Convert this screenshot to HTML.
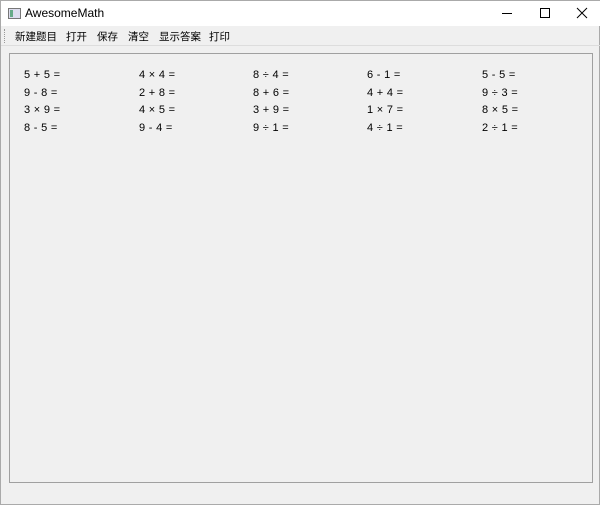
<!DOCTYPE html>
<html><head><meta charset="utf-8"><style>
body{margin:0;width:600px;height:505px;background:#f0f0f0;font-family:"Liberation Sans","Noto Sans CJK SC",sans-serif;position:relative;overflow:hidden;border:1px solid #aaa;box-sizing:border-box}
.title{position:absolute;left:0;top:0;width:600px;height:25px;background:#fff}
.title span{position:absolute;left:24px;top:5px;font-size:12px;color:#000}
.icon{position:absolute;left:7px;top:7px;width:11px;height:9px;border:1px solid #777;background:#dde}
.icon:before{content:"";position:absolute;left:1px;top:1px;width:3px;height:7px;background:#6a8}
.menu{position:absolute;top:25px;left:0;width:600px;height:19px;border-bottom:1px solid #ddd}
.menu span{position:absolute;top:3px;font-size:10.5px;color:#000}
.grip{position:absolute;left:3px;top:28px;width:1px;height:14px;border-left:1px dotted #999}
.panel{position:absolute;left:8px;top:52px;width:582px;height:428px;border:1px solid #a0a0a0}
.q{position:absolute;font-size:11px;color:#000;white-space:pre;letter-spacing:0.3px}
</style></head><body>
<div class="title"><div class="icon"></div><span>AwesomeMath</span>
<svg style="position:absolute;left:500px;top:6px" width="90" height="14">
<line x1="1" y1="6.5" x2="11" y2="6.5" stroke="#000"/>
<rect x="39.5" y="1.5" width="9" height="9" fill="none" stroke="#000"/>
<path d="M76 1L86 11M86 1L76 11" stroke="#000"/>
</svg></div>
<div class="grip"></div>
<div class="menu">
<span style="left:14px">新建题目</span><span style="left:65px">打开</span><span style="left:96px">保存</span><span style="left:127px">清空</span><span style="left:158px">显示答案</span><span style="left:208px">打印</span></div>
<div class="panel"></div>
<div class="q" style="left:23px;top:68px">5 + 5 =</div><div class="q" style="left:138px;top:68px">4 × 4 =</div><div class="q" style="left:252px;top:68px">8 ÷ 4 =</div><div class="q" style="left:366px;top:68px">6 - 1 =</div><div class="q" style="left:481px;top:68px">5 - 5 =</div>
<div class="q" style="left:23px;top:86px">9 - 8 =</div><div class="q" style="left:138px;top:86px">2 + 8 =</div><div class="q" style="left:252px;top:86px">8 + 6 =</div><div class="q" style="left:366px;top:86px">4 + 4 =</div><div class="q" style="left:481px;top:86px">9 ÷ 3 =</div>
<div class="q" style="left:23px;top:103px">3 × 9 =</div><div class="q" style="left:138px;top:103px">4 × 5 =</div><div class="q" style="left:252px;top:103px">3 + 9 =</div><div class="q" style="left:366px;top:103px">1 × 7 =</div><div class="q" style="left:481px;top:103px">8 × 5 =</div>
<div class="q" style="left:23px;top:121px">8 - 5 =</div><div class="q" style="left:138px;top:121px">9 - 4 =</div><div class="q" style="left:252px;top:121px">9 ÷ 1 =</div><div class="q" style="left:366px;top:121px">4 ÷ 1 =</div><div class="q" style="left:481px;top:121px">2 ÷ 1 =</div>
</body></html>
